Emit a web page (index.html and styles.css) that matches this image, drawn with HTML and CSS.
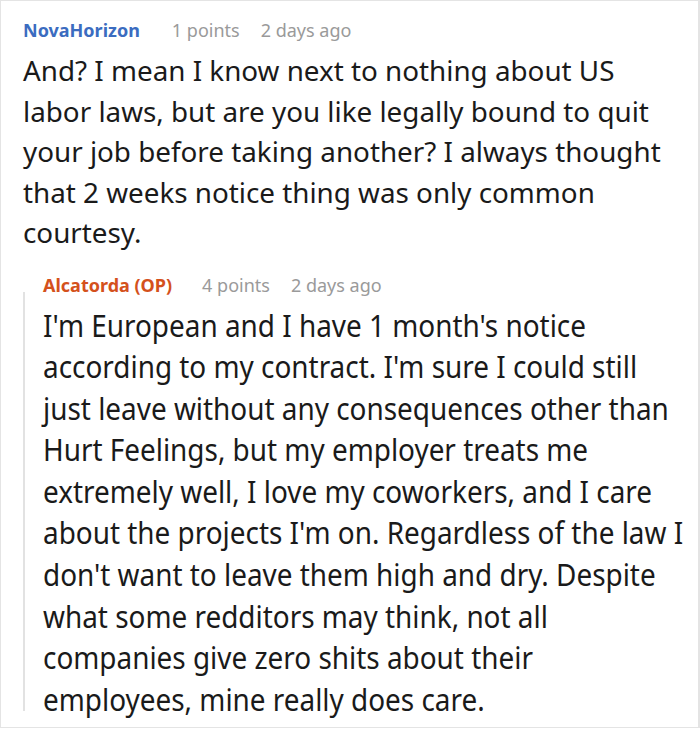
FILE: index.html
```html
<!DOCTYPE html>
<html>
<head>
<meta charset="utf-8">
<link rel="stylesheet" href="styles.css">
</head>
<body>
<div class="frame">
  <div class="comment">
    <div class="meta">
      <span class="author author-blue">NovaHorizon</span>
      <span class="info">1 points</span>
      <span class="info">2 days ago</span>
    </div>
    <p class="text">And? I mean I know next to nothing about US<br>labor laws, but are you like legally bound to quit<br>your job before taking another? I always thought<br>that 2 weeks notice thing was only common<br>courtesy.</p>
    <div class="reply">
      <div class="meta">
        <span class="author author-op">Alcatorda (OP)</span>
        <span class="info">4 points</span>
        <span class="info">2 days ago</span>
      </div>
      <p class="text text-reply">I'm European and I have 1 month's notice<br>according to my contract. I'm sure I could still<br>just leave without any consequences other than<br>Hurt Feelings, but my employer treats me<br>extremely well, I love my coworkers, and I care<br>about the projects I'm on. Regardless of the law I<br>don't want to leave them high and dry. Despite<br>what some redditors may think, not all<br>companies give zero shits about their<br>employees, mine really does care.</p>
    </div>
  </div>
</div>
</body>
</html>
```
FILE: styles.css
```css
html, body {
  margin: 0;
  padding: 0;
  background: #ffffff;
}
.frame {
  width: 700px;
  height: 728px;
  box-sizing: border-box;
  border: 1px solid #e4e4e4;
  border-right-width: 2px;
  background: #fff;
  font-family: "Noto Sans", "Open Sans", sans-serif;
  color: #1a1a1a;
  overflow: hidden;
}
.comment {
  padding: 9px 0 0 22px;
}
.meta {
  display: flex;
  align-items: baseline;
  line-height: 40px;
  font-size: 18px;
}
.author {
  font-weight: 700;
  margin-right: 32px;
}
.author-blue { color: #3b6cc0; }
.author-op { color: #d4511c; margin-right: 30px; }
.info {
  color: #9a9a9a;
  margin-right: 21px;
}
.text {
  margin: 0;
  font-size: 27.8px;
  line-height: 40.5px;
  white-space: nowrap;
}
.reply {
  position: relative;
  margin-top: 12px;
  padding-left: 20px;
}
.reply::before {
  content: "";
  position: absolute;
  left: 0;
  top: 27px;
  bottom: 9px;
  width: 2px;
  background: #e2e2e2;
}
.text-reply {
  font-size: 31px;
  line-height: 41.6px;
  transform: scaleX(0.9);
  transform-origin: left center;
}
```
